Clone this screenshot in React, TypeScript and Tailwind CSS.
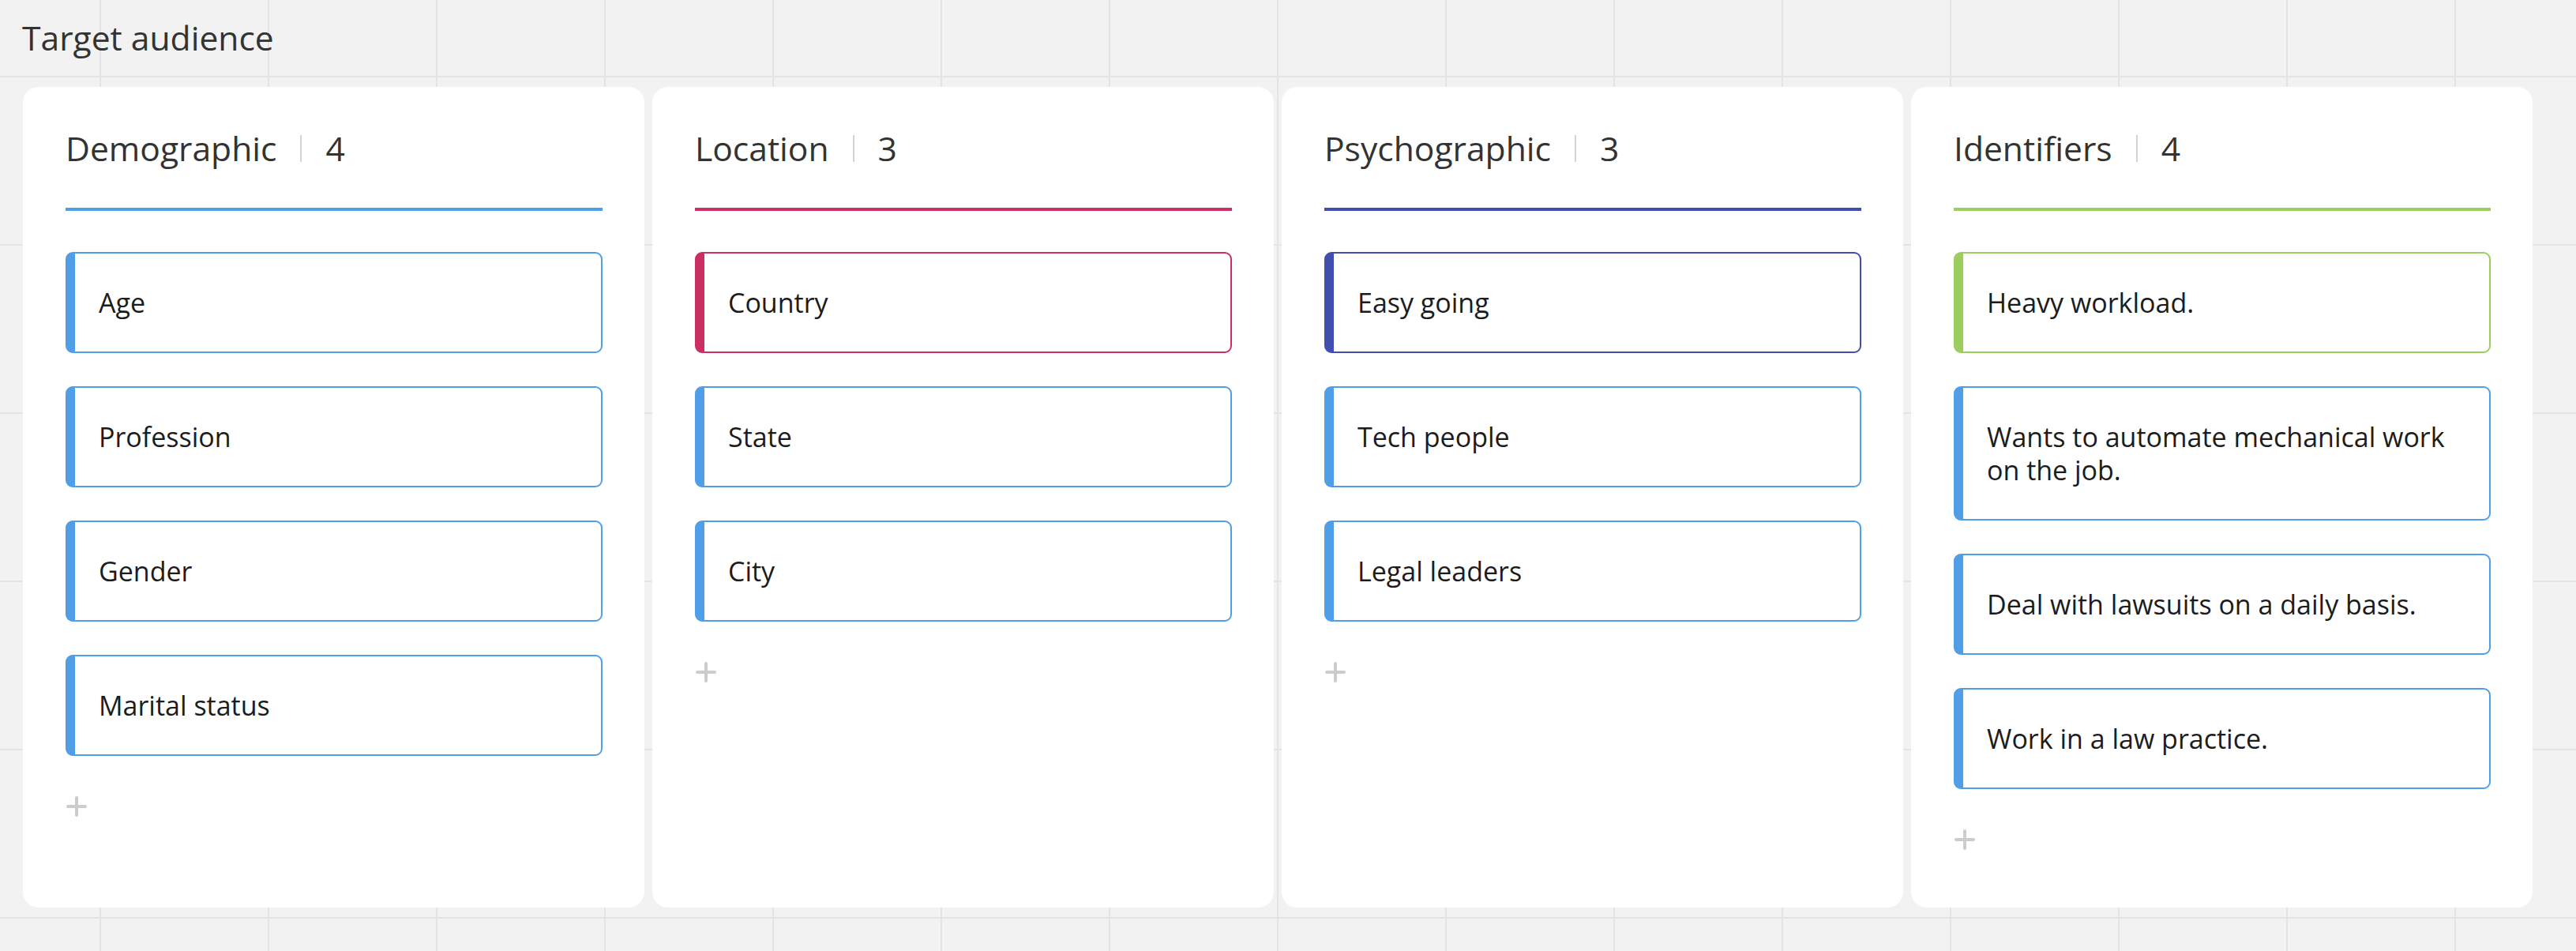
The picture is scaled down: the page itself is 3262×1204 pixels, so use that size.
import React from "react";

type Item = { text: string; color: string };
type Column = { title: string; line: string; items: Item[] };

const BLUE = "#509ee8";
const PINK = "#c92f60";
const INDIGO = "#424db0";
const GREEN = "#9bcd5f";

const columns: Column[] = [
  {
    title: "Demographic",
    line: BLUE,
    items: [
      { text: "Age", color: BLUE },
      { text: "Profession", color: BLUE },
      { text: "Gender", color: BLUE },
      { text: "Marital status", color: BLUE },
    ],
  },
  {
    title: "Location",
    line: PINK,
    items: [
      { text: "Country", color: PINK },
      { text: "State", color: BLUE },
      { text: "City", color: BLUE },
    ],
  },
  {
    title: "Psychographic",
    line: INDIGO,
    items: [
      { text: "Easy going", color: INDIGO },
      { text: "Tech people", color: BLUE },
      { text: "Legal leaders", color: BLUE },
    ],
  },
  {
    title: "Identifiers",
    line: GREEN,
    items: [
      { text: "Heavy workload.", color: GREEN },
      { text: "Wants to automate mechanical work on the job.", color: BLUE },
      { text: "Deal with lawsuits on a daily basis.", color: BLUE },
      { text: "Work in a law practice.", color: BLUE },
    ],
  },
];

function Plus() {
  return (
    <svg width="26" height="26" viewBox="0 0 26 26" className="block">
      <path d="M13 2 V24 M2 13 H24" stroke="#cccccc" strokeWidth="4" strokeLinecap="round" fill="none" />
    </svg>
  );
}

function Card({ col }: { col: Column }) {
  return (
    <div className="w-[787px] h-[1039px] shrink-0 bg-white rounded-[20px] pt-[49px] pl-[54px] pr-[53px] flex flex-col">
      <div className="h-[57px] flex items-center text-[42.6px] leading-[57px] text-[#333333]">
        <span>{col.title}</span>
        <span className="mx-[30px] w-[2px] h-[34px] bg-[#d4d4d4]" />
        <span>{col.items.length}</span>
      </div>
      <div className="mt-[47px] h-[4px] w-full" style={{ backgroundColor: col.line }} />
      <div className="mt-[52px] flex flex-col gap-[42px]">
        {col.items.map((it) => (
          <div
            key={it.text}
            className="border-2 border-l-[12px] rounded-[9px] bg-white pl-[30px] pr-[40px] py-[41px] text-[34px] leading-[42px] text-[#1c1c1c]"
            style={{ borderColor: it.color }}
          >
            {it.text}
          </div>
        ))}
      </div>
      <div className="mt-[51px] pl-[1px]">
        <Plus />
      </div>
    </div>
  );
}

export default function App() {
  return (
    <div
      className="min-h-screen w-full bg-[#f2f2f2] bg-[linear-gradient(to_right,#e4e4e4_2px,transparent_2px),linear-gradient(to_bottom,#e4e4e4_2px,transparent_2px)] bg-[size:213px_213px] bg-[position:126px_96px]"
      style={{ fontFamily: '"Open Sans", "Noto Sans", sans-serif' }}
    >
      <div className="pt-[19px] pl-[28px] text-[42.6px] leading-[56px] text-[#333333]">Target audience</div>
      <div className="mt-[35px] pl-[29px] flex gap-[10px]">
        {columns.map((c) => (
          <Card key={c.title} col={c} />
        ))}
      </div>
    </div>
  );
}
